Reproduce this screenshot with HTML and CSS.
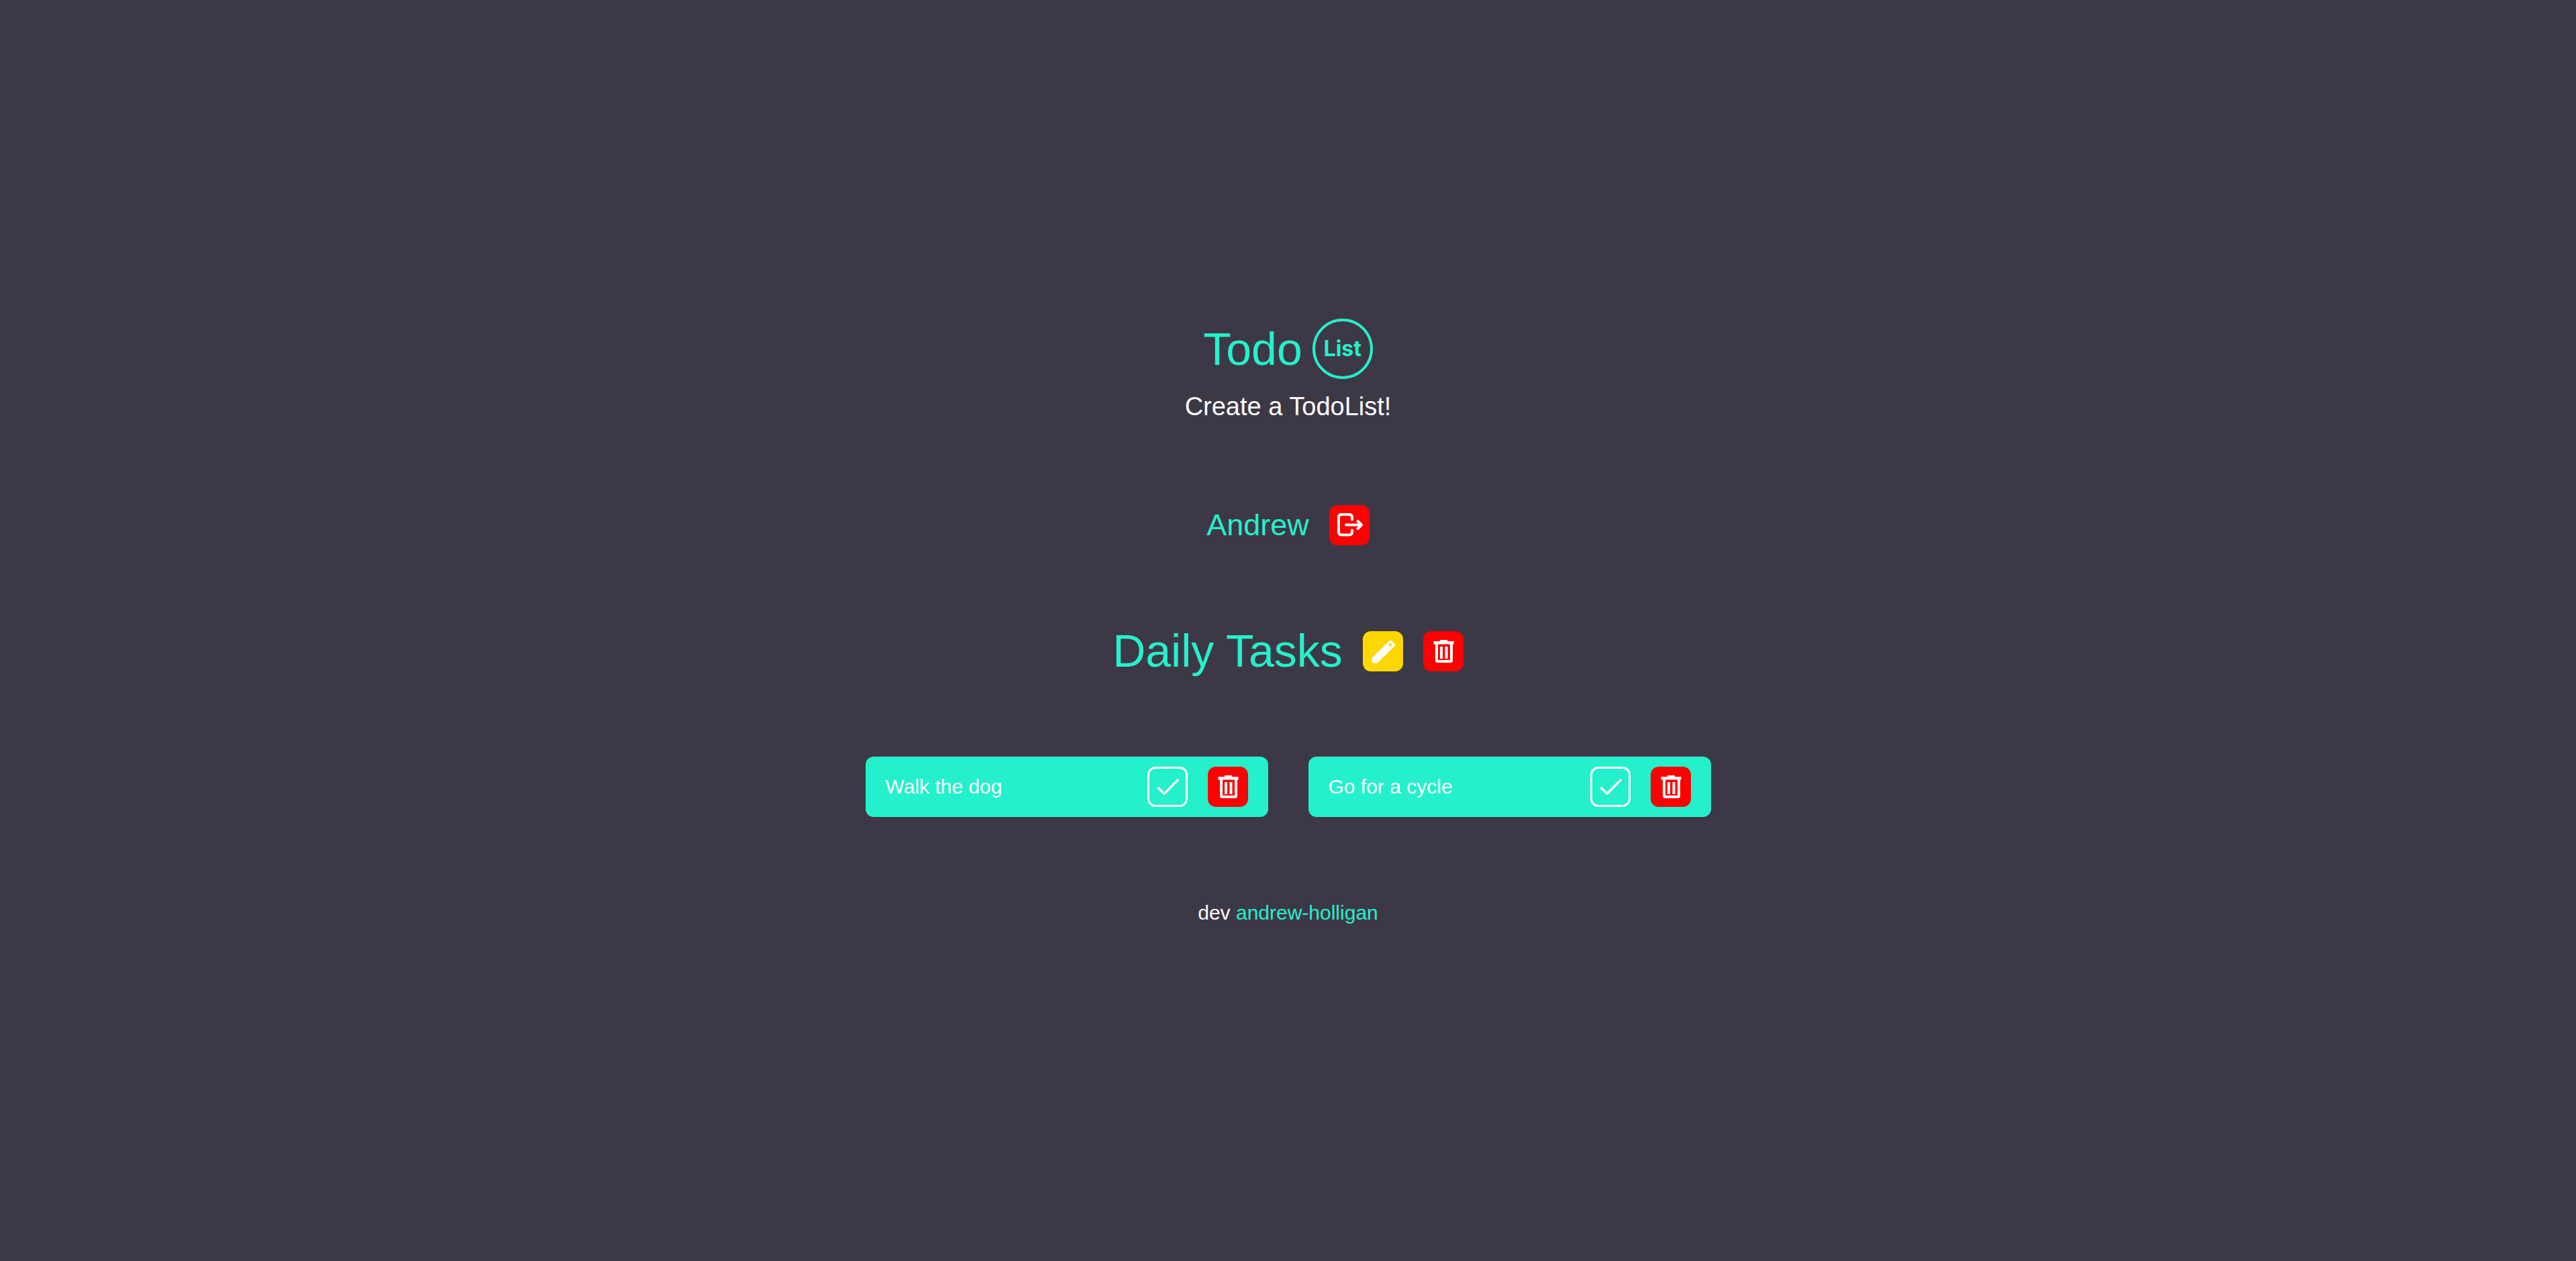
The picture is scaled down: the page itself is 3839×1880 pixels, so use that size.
FILE: index.html
```html
<!DOCTYPE html>
<html lang="en">
<head>
<meta charset="utf-8">
<meta name="viewport" content="width=device-width, initial-scale=1">
<title>TodoList</title>
<link rel="stylesheet" href="styles.css">
</head>
<body>
<svg class="sprite" aria-hidden="true">
  <symbol id="trash" viewBox="0 0 60 60">
    <path fill="currentColor" d="M25 13h11v2h9.500v4.500H44V43.500a3.500 3.500 0 0 1-3.500 3.500h-19a3.500 3.500 0 0 1-3.500-3.500V19.500h-2.500V15H25zM22 19.500V43h18V19.500zM25 23h4v18h-4zM32.500 23h4v18h-4z" fill-rule="evenodd"/>
  </symbol>
  <symbol id="check" viewBox="0 0 60 60">
    <path fill="none" stroke="currentColor" stroke-width="3.500" d="M15.500 31l9.500 9.300L46 19.300"/>
  </symbol>
</svg>
<div class="page">
  <header class="header">
    <div class="brand">
      <h1 class="title">Todo</h1>
      <span class="badge">List</span>
    </div>
    <p class="subtitle">Create a TodoList!</p>
  </header>

  <section class="row">
    <h2 class="user">Andrew</h2>
    <button class="btn btn-red" type="button" aria-label="Log out">
      <svg class="icon" viewBox="0 0 60 60"><path fill="none" stroke="currentColor" stroke-width="4" stroke-linecap="round" stroke-linejoin="round" d="M34 21.500V18a4 4 0 0 0-4-4H18a4 4 0 0 0-4 4v22.500a4 4 0 0 0 4 4h12a4 4 0 0 0 4-4V37.500M25 29.500h22M42.500 24l5.500 5.500-5.500 5.500"/></svg>
    </button>
  </section>

  <section class="row">
    <h2 class="title">Daily Tasks</h2>
    <button class="btn btn-gold" type="button" aria-label="Edit list">
      <svg class="icon" viewBox="0 0 60 60"><path fill="currentColor" fill-rule="evenodd" d="M13.500 47.500V40L38.500 15.200q2.700-2.400 5.400 0l2.700 2.700q2.400 2.600 0 5.200L21.500 47.500zM41 18.200a2.200 2.200 0 1 0 0 4.400a2.200 2.200 0 1 0 0-4.400z"/></svg>
    </button>
    <button class="btn btn-red" type="button" aria-label="Delete list"><svg class="icon"><use href="#trash"/></svg></button>
  </section>

  <ul class="tasks">
    <li class="task">
      <span class="task-name">Walk the dog</span>
      <button class="btn btn-outline" type="button" aria-label="Complete Walk the dog"><svg class="icon"><use href="#check"/></svg></button>
      <button class="btn btn-red" type="button" aria-label="Delete Walk the dog"><svg class="icon"><use href="#trash"/></svg></button>
    </li>
    <li class="task">
      <span class="task-name">Go for a cycle</span>
      <button class="btn btn-outline" type="button" aria-label="Complete Go for a cycle"><svg class="icon"><use href="#check"/></svg></button>
      <button class="btn btn-red" type="button" aria-label="Delete Go for a cycle"><svg class="icon"><use href="#trash"/></svg></button>
    </li>
  </ul>

  <footer class="footer">dev <a class="link" href="#">andrew-holligan</a></footer>
</div>
</body>
</html>
```
FILE: styles.css
```css
* {
  box-sizing: border-box;
  margin: 0;
  padding: 0;
}

:root {
  --bg: #3d3846;
  --accent: #24f1cb;
  --light: #ffffff;
}

body {
  background: var(--bg);
  color: var(--light);
  font-family: "Liberation Sans", Arial, sans-serif;
  font-size: 30px;
}

.sprite {
  display: none;
}

.page {
  min-height: 100vh;
  display: flex;
  flex-direction: column;
  align-items: center;
  justify-content: center;
  gap: 120px;
  padding: 30px 30px 52px;
}

.header {
  display: flex;
  flex-direction: column;
  align-items: center;
  gap: 15px;
}

.brand {
  display: flex;
  align-items: center;
  gap: 15px;
}

.title {
  color: var(--accent);
  font-size: 68px;
  font-weight: 400;
  line-height: 75px;
}

.badge {
  width: 90px;
  height: 90px;
  display: flex;
  align-items: center;
  justify-content: center;
  border: 4px solid var(--accent);
  border-radius: 50%;
  color: var(--accent);
  font: 700 32px/40px Inter, sans-serif;
}

.subtitle {
  font-size: 38px;
  line-height: 53px;
}

.row {
  display: flex;
  align-items: center;
  justify-content: center;
  gap: 30px;
}

.user {
  color: var(--accent);
  font-size: 45px;
  font-weight: 400;
  line-height: 60px;
}

.btn {
  flex: none;
  width: 60px;
  height: 60px;
  border: 0;
  border-radius: 12px;
  color: var(--light);
  cursor: pointer;
}

.btn-red {
  background: #ff0000;
}

.btn-gold {
  background: #ffd700;
}

.btn-outline {
  background: none;
  box-shadow: inset 0 0 0 3px var(--light);
}

.icon {
  display: block;
  width: 60px;
  height: 60px;
}

.tasks {
  display: flex;
  flex-wrap: wrap;
  justify-content: center;
  gap: 60px;
  list-style: none;
}

.task {
  width: 600px;
  max-width: 100%;
  display: flex;
  align-items: center;
  gap: 30px;
  padding: 15px 30px;
  border-radius: 12px;
  background: var(--accent);
}

.task-name {
  flex: 1;
}

.footer {
  line-height: 45px;
}

.link {
  color: var(--accent);
  text-decoration: none;
}
```
